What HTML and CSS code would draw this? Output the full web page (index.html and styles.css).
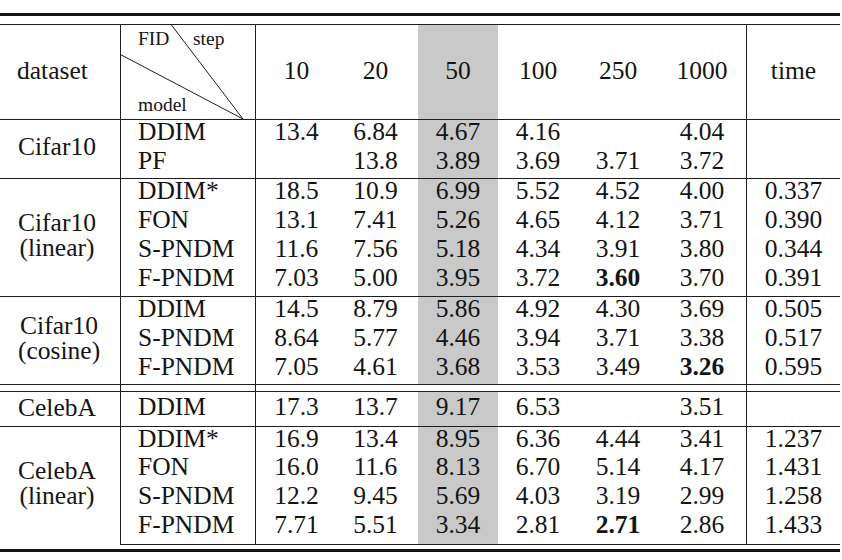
FILE: index.html
```html
<!DOCTYPE html>
<html lang="en">
<head>
<meta charset="utf-8">
<title>FID results</title>
<link rel="stylesheet" href="styles.css">
</head>
<body>
<div class="frame">
<table class="results">
<colgroup>
<col class="w-data"><col class="w-model"><col class="w-num"><col class="w-num"><col class="w-hl"><col class="w-num2"><col class="w-num2"><col class="w-1000"><col class="w-time">
</colgroup>
<thead>
<tr>
<th class="c-data">dataset</th>
<th class="c-model diag">
<svg class="diag-lines" width="134" height="94" viewBox="0 0 134 94"><line x1="49.7" y1="-1" x2="122" y2="94"/><line x1="-1" y1="29.3" x2="122" y2="94"/></svg>
<span class="lbl fid">FID</span><span class="lbl step">step</span><span class="lbl model">model</span>
</th>
<th>10</th><th class="c20">20</th><th class="hl">50</th><th>100</th><th>250</th><th class="c-1000">1000</th><th>time</th>
</tr>
</thead>

<tbody class="g g1">
<tr class="h29"><td class="c-data" rowspan="2"><span class="stack">Cifar10</span></td><td class="c-model">DDIM</td><td>13.4</td><td class="c20">6.84</td><td class="hl">4.67</td><td>4.16</td><td></td><td class="c-1000">4.04</td><td></td></tr>
<tr class="h29"><td class="c-model">PF</td><td></td><td class="c20">13.8</td><td class="hl">3.89</td><td>3.69</td><td>3.71</td><td class="c-1000">3.72</td><td></td></tr>
</tbody>

<tbody class="g g2">
<tr class="top h30"><td class="c-data" rowspan="4"><span class="stack">Cifar10<br>(linear)</span></td><td class="c-model">DDIM*</td><td>18.5</td><td class="c20">10.9</td><td class="hl">6.99</td><td>5.52</td><td>4.52</td><td class="c-1000">4.00</td><td>0.337</td></tr>
<tr class="h29"><td class="c-model">FON</td><td>13.1</td><td class="c20">7.41</td><td class="hl">5.26</td><td>4.65</td><td>4.12</td><td class="c-1000">3.71</td><td>0.390</td></tr>
<tr class="h29"><td class="c-model">S-PNDM</td><td>11.6</td><td class="c20">7.56</td><td class="hl">5.18</td><td>4.34</td><td>3.91</td><td class="c-1000">3.80</td><td>0.344</td></tr>
<tr class="h30"><td class="c-model">F-PNDM</td><td>7.03</td><td class="c20">5.00</td><td class="hl">3.95</td><td>3.72</td><td><b>3.60</b></td><td class="c-1000">3.70</td><td>0.391</td></tr>
</tbody>

<tbody class="g g3">
<tr class="top h30"><td class="c-data" rowspan="3"><span class="stack">Cifar10<br>(cosine)</span></td><td class="c-model">DDIM</td><td>14.5</td><td class="c20">8.79</td><td class="hl">5.86</td><td>4.92</td><td>4.30</td><td class="c-1000">3.69</td><td>0.505</td></tr>
<tr class="h29"><td class="c-model">S-PNDM</td><td>8.64</td><td class="c20">5.77</td><td class="hl">4.46</td><td>3.94</td><td>3.71</td><td class="c-1000">3.38</td><td>0.517</td></tr>
<tr class="h29"><td class="c-model">F-PNDM</td><td>7.05</td><td class="c20">4.61</td><td class="hl">3.68</td><td>3.53</td><td>3.49</td><td class="c-1000"><b>3.26</b></td><td>0.595</td></tr>
<tr class="gap"><td class="c-data"></td><td class="c-model"></td><td></td><td class="c20"></td><td></td><td></td><td></td><td class="c-1000"></td><td></td></tr>
</tbody>

<tbody class="g g4">
<tr class="solo"><td class="c-data"><span class="stack">CelebA</span></td><td class="c-model">DDIM</td><td>17.3</td><td class="c20">13.7</td><td class="hl">9.17</td><td>6.53</td><td></td><td class="c-1000">3.51</td><td></td></tr>
</tbody>

<tbody class="g g5">
<tr class="top h29"><td class="c-data" rowspan="4"><span class="stack">CelebA<br>(linear)</span></td><td class="c-model">DDIM*</td><td>16.9</td><td class="c20">13.4</td><td class="hl">8.95</td><td>6.36</td><td>4.44</td><td class="c-1000">3.41</td><td>1.237</td></tr>
<tr class="h29"><td class="c-model">FON</td><td>16.0</td><td class="c20">11.6</td><td class="hl">8.13</td><td>6.70</td><td>5.14</td><td class="c-1000">4.17</td><td>1.431</td></tr>
<tr class="h29"><td class="c-model">S-PNDM</td><td>12.2</td><td class="c20">9.45</td><td class="hl">5.69</td><td>4.03</td><td>3.19</td><td class="c-1000">2.99</td><td>1.258</td></tr>
<tr class="last h32"><td class="c-model">F-PNDM</td><td>7.71</td><td class="c20">5.51</td><td class="hl">3.34</td><td>2.81</td><td><b>2.71</b></td><td class="c-1000">2.86</td><td>1.433</td></tr>
</tbody>
</table>
</div>
</body>
</html>
```

FILE: styles.css
```css
html, body {
  margin: 0;
  padding: 0;
  background: #ffffff;
}

body {
  font-family: "Liberation Serif", "Times New Roman", serif;
  color: #141414;
}

.frame {
  width: 840px;
  margin-top: 13px;
  border-top: 3px solid #141414;
  padding-top: 8px;
  border-bottom: 3px solid #141414;
  padding-bottom: 4px;
}

.results {
  width: 840px;
  table-layout: fixed;
  border-collapse: separate;
  border-spacing: 0;
  font-family: "Liberation Serif", "Times New Roman", serif;
  font-size: 25.5px;
}

.w-data { width: 121px; }
.w-model { width: 135px; }
.w-num { width: 81px; }
.w-hl { width: 80px; }
.w-num2 { width: 80px; }
.w-1000 { width: 89px; }
.w-time { width: 93px; }

.results th,
.results td {
  box-sizing: border-box;
  padding: 0;
  text-align: center;
  font-weight: normal;
  line-height: 24px;
  vertical-align: top;
  white-space: nowrap;
}

.results b { font-weight: bold; }

/* header */
.results thead th {
  height: 96px;
  border-top: 1px solid #1e1e1e;
  border-bottom: 1px solid #1e1e1e;
  vertical-align: middle;
  padding-bottom: 3px;
}

/* vertical rules */
.results .c-data { border-right: 1px solid #1e1e1e; text-align: left; padding-left: 17px; }
.results .c-model { border-right: 1px solid #1e1e1e; text-align: left; padding-left: 17px; }
.results .c-1000 { border-right: 1px solid #1e1e1e; }
.results .c20 { padding-right: 4px; }

.results .hl { background: #c9c9c9; }

/* dataset stacks */
.results tbody .c-data {
  vertical-align: middle;
  padding-left: 18px;
  padding-bottom: 6px;
}
.stack {
  display: inline-block;
  text-align: center;
  line-height: 25px;
}

/* row heights */
.h29 > td { height: 29px; }
.h30 > td { height: 30px; }
.h32 > td { height: 32px; }
.top > td { border-top: 1px solid #1e1e1e; }
.last > td { border-bottom: 1px solid #1e1e1e; }

.gap > td {
  height: 4px;
  line-height: 0;
  border-top: 1px solid #1e1e1e;
  border-bottom: 1px solid #1e1e1e;
  background: #ffffff;
}

.solo > td {
  height: 34px;
  padding-top: 3px;
}
.results tbody .solo > .c-data {
  vertical-align: top;
  padding-bottom: 0;
}

/* diagonal header cell */
.diag {
  position: relative;
}
.diag-lines {
  position: absolute;
  left: 0;
  top: 0;
  overflow: visible;
}
.diag-lines line {
  stroke: #1e1e1e;
  stroke-width: 1;
}
.lbl {
  position: absolute;
  font-size: 19.5px;
  line-height: 19.5px;
}
.lbl.fid { left: 17px; top: 4px; }
.lbl.step { left: 72px; top: 4px; }
.lbl.model { left: 17px; top: 70px; }
```
